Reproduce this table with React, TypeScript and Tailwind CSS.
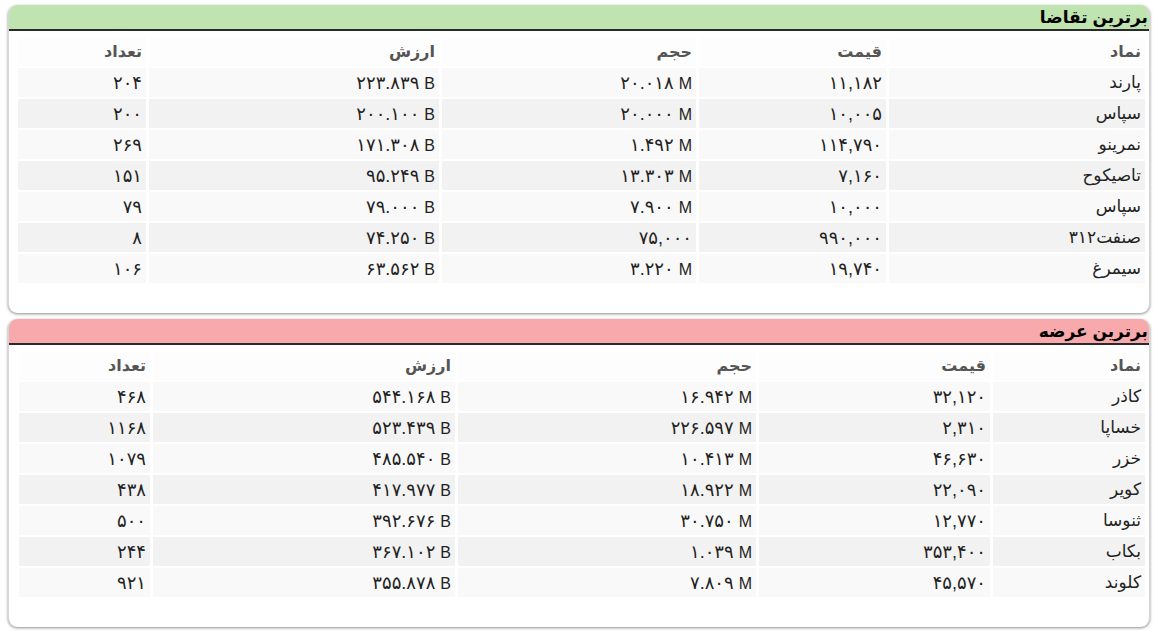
import React from "react";

type Row = [string, string, string, string, string];

const demand: Row[] = [
  ["پارند", "۱۱,۱۸۲", "۲۰.۰۱۸ M", "۲۲۳.۸۳۹ B", "۲۰۴"],
  ["سپاس", "۱۰,۰۰۵", "۲۰.۰۰۰ M", "۲۰۰.۱۰۰ B", "۲۰۰"],
  ["نمرینو", "۱۱۴,۷۹۰", "۱.۴۹۲ M", "۱۷۱.۳۰۸ B", "۲۶۹"],
  ["تاصیکوح", "۷,۱۶۰", "۱۳.۳۰۳ M", "۹۵.۲۴۹ B", "۱۵۱"],
  ["سپاس", "۱۰,۰۰۰", "۷.۹۰۰ M", "۷۹.۰۰۰ B", "۷۹"],
  ["صنفت۳۱۲", "۹۹۰,۰۰۰", "۷۵,۰۰۰", "۷۴.۲۵۰ B", "۸"],
  ["سیمرغ", "۱۹,۷۴۰", "۳.۲۲۰ M", "۶۳.۵۶۲ B", "۱۰۶"],
];

const supply: Row[] = [
  ["کاذر", "۳۲,۱۲۰", "۱۶.۹۴۲ M", "۵۴۴.۱۶۸ B", "۴۶۸"],
  ["خساپا", "۲,۳۱۰", "۲۲۶.۵۹۷ M", "۵۲۳.۴۳۹ B", "۱۱۶۸"],
  ["خزر", "۴۶,۶۳۰", "۱۰.۴۱۳ M", "۴۸۵.۵۴۰ B", "۱۰۷۹"],
  ["کویر", "۲۲,۰۹۰", "۱۸.۹۲۲ M", "۴۱۷.۹۷۷ B", "۴۳۸"],
  ["ثنوسا", "۱۲,۷۷۰", "۳۰.۷۵۰ M", "۳۹۲.۶۷۶ B", "۵۰۰"],
  ["بکاب", "۳۵۳,۴۰۰", "۱.۰۳۹ M", "۳۶۷.۱۰۲ B", "۲۴۴"],
  ["کلوند", "۴۵,۵۷۰", "۷.۸۰۹ M", "۳۵۵.۸۷۸ B", "۹۲۱"],
];

const heads = ["نماد", "قیمت", "حجم", "ارزش", "تعداد"];

function Value({ v }: { v: string }) {
  const parts = v.split(" ");
  return (
    <span dir="ltr" className="inline-flex items-baseline gap-[5px]">
      <span className="text-[18px]">{parts[0]}</span>
      {parts[1] ? <span className="text-[16px]">{parts[1]}</span> : null}
    </span>
  );
}

function Card({
  title,
  headerClass,
  rows,
  widths,
}: {
  title: string;
  headerClass: string;
  rows: Row[];
  widths: number[];
}) {
  return (
    <div className="rounded-t-[9px] rounded-b-[9px] bg-white border-x border-[#d6d6d6] shadow-[0_1px_3px_rgba(0,0,0,0.45)] overflow-hidden">
      <div
        className={`${headerClass} h-[26px] border-b-2 border-[#2a2a2a] flex items-center justify-start pr-[1px]`}
      >
        <span className="text-[17px] font-bold text-black leading-none">{title}</span>
      </div>
      <div className="pl-[9px] pr-[1px] pt-[4px] pb-[28px]">
        <table className="table-fixed w-full border-separate border-spacing-x-[3px] border-spacing-y-[2px]">
          <colgroup>
            {widths.map((w, i) => (
              <col key={i} style={{ width: w }} />
            ))}
          </colgroup>
          <thead>
            <tr>
              {heads.map((h) => (
                <th
                  key={h}
                  className="h-[29px] bg-[#fdfdfd] text-right pr-[4px] font-semibold text-[16px] text-[#555]"
                >
                  {h}
                </th>
              ))}
            </tr>
          </thead>
          <tbody>
            {rows.map((r, i) => (
              <tr key={i}>
                {r.map((c, j) => (
                  <td
                    key={j}
                    className={`h-[29px] text-right pr-[4px] text-[17px] leading-none text-[#222] ${
                      i % 2 === 0 ? "bg-[#f9f9f9]" : "bg-[#f2f2f2]"
                    }`}
                  >
                    {j === 0 ? c : <Value v={c} />}
                  </td>
                ))}
              </tr>
            ))}
          </tbody>
        </table>
      </div>
    </div>
  );
}

export default function App() {
  return (
    <div
      dir="rtl"
      className="w-[1158px] h-[636px] bg-white pt-[5px] px-[8px] flex flex-col gap-[6px]"
      style={{ fontFamily: '"Liberation Sans", "DejaVu Sans", sans-serif' }}
    >
      <Card
        title="برترین تقاضا"
        headerClass="bg-[#bfe4b0]"
        rows={demand}
        widths={[256, 187, 254, 290, 128]}
      />
      <Card
        title="برترین عرضه"
        headerClass="bg-[#f7a9ab]"
        rows={supply}
        widths={[152, 231, 298, 302, 131]}
      />
    </div>
  );
}
